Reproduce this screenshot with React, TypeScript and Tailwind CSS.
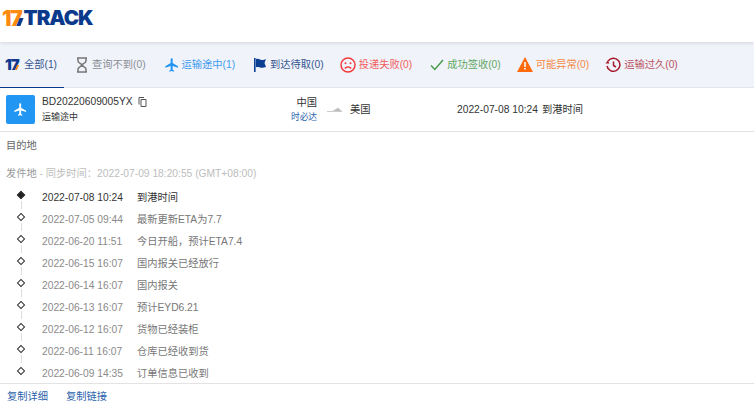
const sans = "font-['Liberation_Sans','Noto_Sans_CJK_SC',sans-serif]"

const PLANE =
  'M21 16v-2l-8-5V3.500C13 2.670 12.330 2 11.500 2S10 2.670 10 3.500V9l-8 5v2l8-2.500V19l-2 1.500V22l3.500-1 3.500 1v-1.500L13 19v-5.500l8 2.500z'

function Logo() {
  return (
    <span className="flex items-center font-['Inter',sans-serif] text-[21px] font-black leading-none">
      <span className="tracking-[-1.200px] text-[#ff8a10]">17</span>
      <span className="ml-[-4px] mt-[8px] h-[8px] w-[4px] skew-x-[-22deg] bg-[#0b3a8c]" />
      <span className="ml-[2px] text-[20.500px] tracking-[-1px] text-[#0b3a8c]">TRACK</span>
    </span>
  )
}

function TabLogo() {
  return (
    <span className="flex w-[17px] items-center font-['Inter',sans-serif] text-[15px] font-black leading-none">
      <span className="tracking-[-1px] text-[#12388f]">17</span>
      <span className="ml-[-3px] mt-[6px] h-[5px] w-[2px] skew-x-[-22deg] bg-[#ff8a10]" />
    </span>
  )
}

function Hourglass() {
  return (
    <svg width="12" height="16" viewBox="0 0 12 16" fill="none" stroke="#777" strokeWidth="1.500">
      <path d="M1 1h10M1 15h10M2 1v3c0 2 4 3 4 4s-4 2-4 4v3M10 1v3c0 2-4 3-4 4s4 2 4 4v3" />
    </svg>
  )
}

function PlaneIcon({ color, size }: { color: string; size: number }) {
  return (
    <svg width={size} height={size} viewBox="0 0 24 24" fill={color}>
      <path d={PLANE} />
    </svg>
  )
}

function Flag() {
  return (
    <svg width="12" height="14" viewBox="0 0 12 14" fill="#0c3f91">
      <path d="M0 0h1.600v14H0zM2 1c3-1 4 1 6 1 1.600 0 2.500-.4 4-1l-1.500 4 1.500 4c-3 1-4.500 1-6 .4C4 9 3 9 2 9.300z" />
    </svg>
  )
}

function Sad() {
  return (
    <svg width="16" height="16" viewBox="0 0 16 16" fill="none" stroke="#f23c3c" strokeWidth="1.500">
      <circle cx="8" cy="8" r="7" />
      <path d="M4.800 11.500c1.500-2 4.900-2 6.400 0" />
      <circle cx="5.500" cy="6.200" r="1" fill="#f23c3c" stroke="none" />
      <circle cx="10.500" cy="6.200" r="1" fill="#f23c3c" stroke="none" />
    </svg>
  )
}

function Check() {
  return (
    <svg width="14" height="12" viewBox="0 0 14 12" fill="none" stroke="#4a9b4e" strokeWidth="1.500">
      <path d="M1 6.500l3.800 4L13 1" />
    </svg>
  )
}

function Warning() {
  return (
    <svg width="16" height="15" viewBox="0 0 16 15">
      <path d="M8 0l8 15H0z" fill="#ff6a0d" />
      <path d="M7.200 5h1.600v5H7.200zM7.200 11h1.600v1.600H7.200z" fill="#fff" />
    </svg>
  )
}

function History() {
  return (
    <svg width="16" height="16" viewBox="0 0 16 16" fill="none" stroke="#a8192b" strokeWidth="1.500">
      <path d="M3 4.200A6.500 6.500 0 1 1 2 9" />
      <path d="M0.500 6.500h4L2.800 3.500z" fill="#a8192b" stroke="none" />
      <path d="M8.500 4.500v4l2.500 1.500" />
    </svg>
  )
}

const tabs = [
  { label: '全部(1)', color: 'text-[#34558f]', icon: <TabLogo />, cls: 'ml-[5px] gap-[2px]' },
  { label: '查询不到(0)', color: 'text-[#8a8d94]', icon: <Hourglass />, cls: 'ml-[19px] gap-[4px]' },
  { label: '运输途中(1)', color: 'text-[#3f9bf0]', icon: <PlaneIcon color="#2196f3" size={16} />, cls: 'ml-[18px] gap-[2px]' },
  { label: '到达待取(0)', color: 'text-[#34558f]', icon: <Flag />, cls: 'ml-[19px] gap-[4px]' },
  { label: '投递失败(0)', color: 'text-[#f25c5c]', icon: <Sad />, cls: 'ml-[16px] gap-[3px]' },
  { label: '成功签收(0)', color: 'text-[#5fa862]', icon: <Check />, cls: 'ml-[18px] gap-[3px]' },
  { label: '可能异常(0)', color: 'text-[#f58a45]', icon: <Warning />, cls: 'ml-[16px] gap-[3px]' },
  { label: '运输过久(0)', color: 'text-[#b8525e]', icon: <History />, cls: 'ml-[16px] gap-[3px]' },
]

const events = [
  { time: '2022-07-08 10:24', text: '到港时间' },
  { time: '2022-07-05 09:44', text: '最新更新ETA为7.7' },
  { time: '2022-06-20 11:51', text: '今日开船，预计ETA7.4' },
  { time: '2022-06-15 16:07', text: '国内报关已经放行' },
  { time: '2022-06-14 16:07', text: '国内报关' },
  { time: '2022-06-13 16:07', text: '预计EYD6.21' },
  { time: '2022-06-12 16:07', text: '货物已经装柜' },
  { time: '2022-06-11 16:07', text: '仓库已经收到货' },
  { time: '2022-06-09 14:35', text: '订单信息已收到' },
]

export default function App() {
  return (
    <div className={`${sans} flex h-[409px] w-[754px] flex-col overflow-hidden bg-white text-[10.250px]`}>
      <header className="z-10 flex h-[42px] shrink-0 items-center pb-[6px] pl-[2px] shadow-[0_1px_4px_rgba(0,0,0,0.12)]">
        <Logo />
      </header>

      <nav className="flex h-[46px] shrink-0 border-b border-[#e4e6ec] bg-[#f0f3fa]">
        {tabs.map((tab, i) => (
          <div key={tab.label} className={`relative flex items-center ${tab.cls} ${tab.color}`}>
            {tab.icon}
            <span className="whitespace-nowrap">{tab.label}</span>
            {i === 0 && <span className="absolute bottom-[-1px] left-[-5px] right-[-7px] h-[1.500px] bg-[#0b3a8c]" />}
          </div>
        ))}
      </nav>

      <section className="flex h-[44px] shrink-0 items-center border-b border-[#e3e3e3] pl-[6px]">
        <div className="flex h-[29px] w-[29px] items-center justify-center rounded-[2px] bg-[#2196f3]">
          <PlaneIcon color="#fff" size={15} />
        </div>
        <div className="ml-[7px] flex w-[242px] flex-col gap-[2px]">
          <div className="flex items-center gap-[5px] text-[#333]">
            <span>BD20220609005YX</span>
            <svg width="9" height="10" viewBox="0 0 9 10" fill="none" stroke="#555" strokeWidth="1">
              <path d="M1 7.500V.500h5M3 2.500h5v7H3z" />
            </svg>
          </div>
          <span className="text-[9px] text-[#333]">运输途中</span>
        </div>
        <div className="flex w-[33px] flex-col items-end gap-[1px]">
          <span className="text-[#333]">中国</span>
          <span className="text-[8.700px] text-[#2a62ab]">时必达</span>
        </div>
        <svg className="ml-[10px]" width="16" height="6" viewBox="0 0 16 6">
          <path d="M0 4.500h15M6 4l5-3 4 3.500z" fill="#bbb" stroke="#ccc" strokeWidth="1" />
        </svg>
        <span className="ml-[7px] w-[107px] text-[#333]">美国</span>
        <span className="whitespace-nowrap text-[#333]">2022-07-08 10:24</span>
        <span className="ml-[4px] text-[#333]">到港时间</span>
      </section>

      <div className="flex min-h-0 flex-1 flex-col overflow-hidden pl-[6px]">
        <p className="mt-[7px] h-[14px] leading-[14px] text-[#666]">目的地</p>
        <p className="mt-[14px] h-[14px] leading-[14px] text-[#bdbdbd]">
          <span className="text-[#999]">发件地</span> - 同步时间：2022-07-09 18:20:55 (GMT+08:00)
        </p>
        <ul className="mt-[6px] flex shrink-0 flex-col">
          {events.map((ev, i) => (
            <li key={ev.time} className="flex h-[22px] items-center">
              <span className="relative flex w-[36px] shrink-0 justify-center self-stretch pr-[6px]">
                <span
                  className={`mt-[5px] h-[6px] w-[6px] rotate-45 border border-[#333] ${i === 0 ? 'bg-[#222]' : 'bg-white'}`}
                />
                {i < events.length - 1 && (
                  <span className="absolute left-[14.500px] top-[14px] h-[8px] w-[1px] bg-[#dcdcdc]" />
                )}
              </span>
              <span className={`w-[95px] shrink-0 ${i === 0 ? 'text-[#333]' : 'text-[#8a8a8a]'}`}>{ev.time}</span>
              <span className={i === 0 ? 'text-[#333]' : 'text-[#777]'}>{ev.text}</span>
            </li>
          ))}
        </ul>
      </div>

      <footer className="flex h-[26px] shrink-0 items-center gap-[18px] border-t border-[#e3e3e3] pl-[7px] text-[#2a62ab]">
        <span>复制详细</span>
        <span>复制链接</span>
      </footer>
    </div>
  )
}
